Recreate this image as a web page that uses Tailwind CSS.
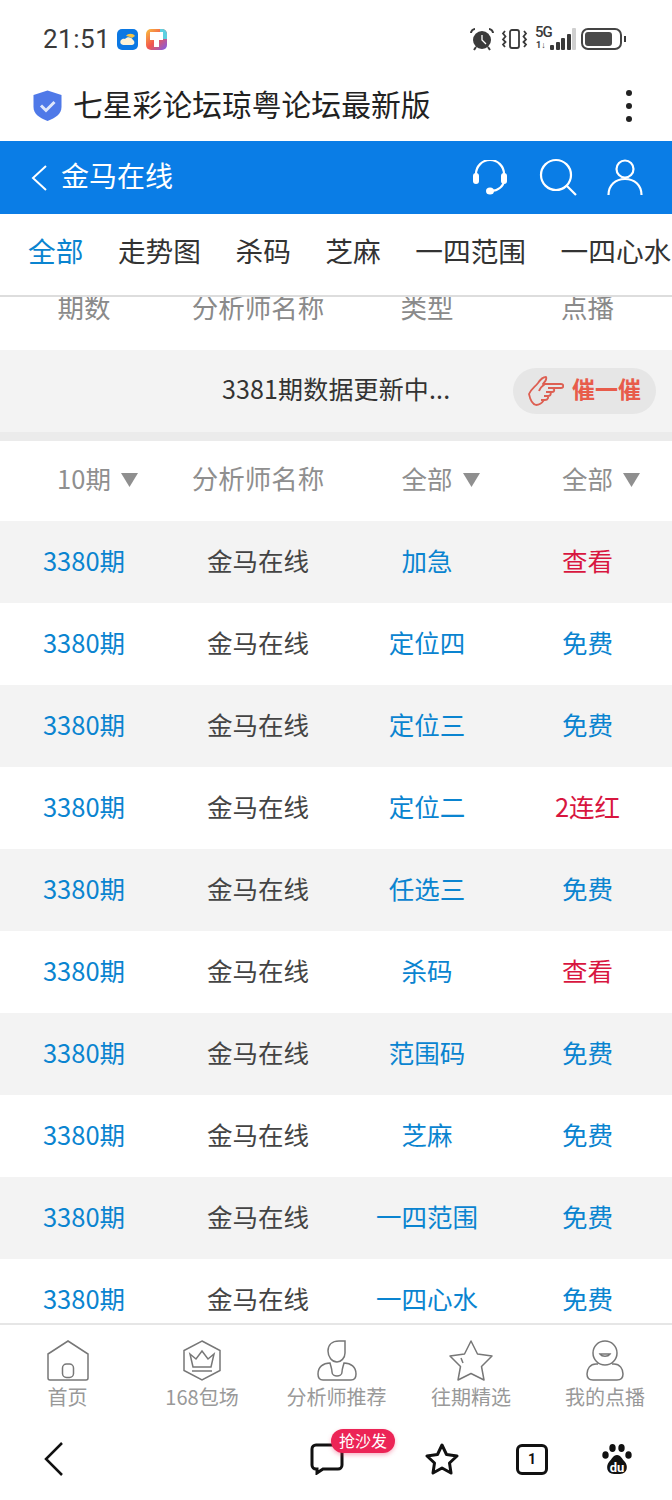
<!doctype html>
<html>
<head>
<meta charset="UTF-8">
<meta name="viewport" content="width=device-width, initial-scale=1.0">
<script src="https://cdn.jsdelivr.net/npm/@tailwindcss/browser@4"></script>
<title>金马在线</title>
</head>
<body class="bg-white font-['Noto_Sans_CJK_SC','Noto_Sans',sans-serif]">
<div class="w-[672px] h-[1500px] flex flex-col overflow-hidden">

  <!-- status bar -->
  <div class="h-[70px] flex items-center justify-between pl-[43px] pr-[46px] pt-[8px] text-[#3a3a3a]">
    <div class="flex items-center">
      <span class="text-[26px] font-['Roboto'] tracking-[0.5px] mr-[7px]">21:51</span>
      <svg class="mr-[8px]" width="21" height="21" viewBox="0 0 21 21"><rect width="21" height="21" rx="5" fill="#0b78e3"/><path d="M4 15c-2-3 1-6 4-5 2-3 7-2 8 1 2 1 2 5-1 5H6z" fill="#fdf3d8"/><path d="M9 7c2-3 7-3 9 0l-3 2c-2-1-4-2-6-2z" fill="#f6c445"/></svg>
      <svg width="21" height="21" viewBox="0 0 21 21"><defs><linearGradient id="g" x1="0" y1="0" x2="1" y2="1"><stop offset="0" stop-color="#f9c23c"/><stop offset=".5" stop-color="#f2564e"/><stop offset="1" stop-color="#7b5cf0"/></linearGradient></defs><rect width="21" height="21" rx="5" fill="url(#g)"/><path d="M14 0h2a5 5 0 0 1 5 5v5h-7z" fill="#5ccfe0"/><path d="M4 3h13v8h-4v7H8v-7H4z" fill="#fff"/></svg>
    </div>
    <div class="flex items-center">
      <svg class="mr-[7px]" width="24" height="24" viewBox="0 0 24 24" fill="#3a3a3a"><circle cx="12" cy="13" r="9"/><path d="M12 8v5l4 4" stroke="#fff" stroke-width="1.300" fill="none"/><path d="M1 6c0-2 2-4 4-4M23 6c0-2-2-4-4-4M6 20l-2 3M18 20l2 3" stroke="#3a3a3a" stroke-width="2" fill="none"/></svg>
      <svg class="mr-[7px]" width="27" height="20" viewBox="0 0 27 20" fill="none" stroke="#3a3a3a" stroke-width="1.800"><rect x="9" y="1" width="9" height="18" rx="2"/><path d="M4 2 2 4.500 4.500 7.500 2 10.500 4.500 13 2 15.500 4 18M23 2l2 2.500-2.500 3 2.500 3-2.500 2.500 2.500 2.500-2 2.500"/></svg>
      <div class="relative w-[39px] h-[22px] mr-[7px]">
        <span class="absolute left-0 top-[-3px] text-[15px] leading-[15px] font-medium tracking-[-1px] font-['Roboto'] text-[#3a3a3a]">5G</span>
        <span class="absolute left-[1px] top-[13px] text-[9px] leading-[9px] font-bold font-['Roboto'] text-[#3a3a3a]">1↓</span>
        <div class="absolute left-[15px] bottom-0 flex items-end gap-[1.500px]">
          <i class="block w-[4px] h-[5px] bg-[#3a3a3a] rounded-[1px]"></i><i class="block w-[4px] h-[8px] bg-[#3a3a3a] rounded-[1px]"></i><i class="block w-[4px] h-[12px] bg-[#3a3a3a] rounded-[1px]"></i><i class="block w-[4px] h-[16px] bg-[#3a3a3a] rounded-[1px]"></i><i class="block w-[4px] h-[22px] bg-[#cfcfcf] rounded-[1px]"></i>
        </div>
      </div>
      <div class="w-[41px] h-[22px] border-2 border-[#444] rounded-[7px] p-[2px]"><div class="w-[27px] h-full bg-[#4a4a4a] rounded-[3px]"></div></div>
      <div class="w-[2px] h-[6px] bg-[#3a3a3a] ml-[2px]"></div>
    </div>
  </div>

  <!-- browser address bar -->
  <div class="h-[71px] flex items-center justify-between pl-[33px] pr-[40px]">
    <div class="flex items-center">
      <svg class="mr-[11px]" width="29" height="31" viewBox="0 0 29 31"><path d="M14.500 0.500 28.500 5v12c0 7-6 11-14 14C6.500 28 0.500 24 0.500 17V5z" fill="#4f79e8"/><path d="M8 15.500l5 5 8.500-8.500" fill="none" stroke="#dfe7fb" stroke-width="3"/></svg>
      <span class="text-[29.800px] leading-none text-[#222] pb-[4px]">七星彩论坛琼粤论坛最新版</span>
    </div>
    <div class="flex flex-col gap-[7px]">
      <i class="block w-[6px] h-[6px] rounded-full bg-[#222]"></i><i class="block w-[6px] h-[6px] rounded-full bg-[#222]"></i><i class="block w-[6px] h-[6px] rounded-full bg-[#222]"></i>
    </div>
  </div>

  <!-- blue header -->
  <div class="h-[73px] bg-[#0a7de6] flex items-center justify-between pl-[31px] pr-[29px] text-white">
    <div class="flex items-center">
      <svg class="mr-[14px]" width="16" height="26" viewBox="0 0 16 26" fill="none" stroke="#fff" stroke-width="2"><path d="M15 1 2 13l13 12"/></svg>
      <span class="text-[28px] leading-none pb-[6px]">金马在线</span>
    </div>
    <div class="flex items-center">
      <svg class="mr-[31px]" width="36" height="36" viewBox="0 0 36 36" fill="none" stroke="#fff" stroke-width="2.200"><path d="M4 18V14a14 14 0 0 1 28 0v4"/><path d="M32 20c0 6-6 11-13 11"/><rect x="1" y="13" width="6" height="11" rx="3" fill="#fff" stroke="none"/><rect x="29" y="13" width="6" height="11" rx="3" fill="#fff" stroke="none"/><ellipse cx="18" cy="31" rx="4" ry="3.500" fill="#fff" stroke="none"/></svg>
      <svg class="mr-[29px]" width="39" height="39" viewBox="0 0 39 39" fill="none" stroke="#fff" stroke-width="2.200"><circle cx="17" cy="17" r="15"/><path d="M28 28l9 9"/></svg>
      <svg width="36" height="37" viewBox="0 0 36 37" fill="none" stroke="#fff" stroke-width="2.200"><circle cx="18" cy="10" r="8.500"/><path d="M1.500 36c0-10 7-16 16.500-16s16.500 6 16.500 16"/></svg>
    </div>
  </div>

  <!-- tabs -->
  <div class="h-[81px] flex items-center whitespace-nowrap pl-[28px] gap-[34.500px] text-[27.700px] leading-none text-[#333] overflow-hidden shrink-0 pb-[8px]">
    <span class="text-[#0a84d0]">全部</span><span>走势图</span><span>杀码</span><span>芝麻</span><span>一四范围</span><span>一四心水</span>
  </div>
  <div class="h-[2px] bg-[#dddddd] shrink-0"></div>

  <!-- column titles, scrolled under the tabs -->
  <div class="h-[53px] grid grid-cols-[168px_180px_158px_163px] text-center text-[26.500px] leading-[20px] text-[#8a8a8a] overflow-hidden shrink-0">
    <span>期数</span><span>分析师名称</span><span>类型</span><span>点播</span>
  </div>

  <!-- update notice -->
  <div class="h-[82px] bg-[#f3f3f3] flex items-center shrink-0 pl-[222px] pr-[16px] justify-between">
    <span class="text-[25px] leading-none text-[#333] tracking-[0.15px] pb-[6px]">3381期数据更新中...</span>
    <div class="w-[143px] h-[46px] rounded-full bg-[#e6e6e6] flex items-center pl-[15px]">
      <svg class="mr-[8px]" width="36" height="30" viewBox="0 0 36 30" fill="none" stroke="#dd5f52" stroke-width="1.800" stroke-linejoin="round"><path d="M1 18C3 13 7 11 10 7 12 4 15 1 18 1c1 2-1 5-3 7h18c3 0 3 4 0 4H24c3 0 3 4 0 4h-3c3 0 2 4-1 4h-1c2 1 1 4-2 4h-1c-2 3-5 5-8 5-4-1-6-6-7-11z"/><path d="M11 15c1-3 3-5 6-7M16 24h-3M19 20h-3M21 16h-3M24 12h-4"/></svg>
      <span class="text-[23px] leading-none font-bold text-[#e85c4b] pb-[6px]">催一催</span>
    </div>
  </div>
  <div class="h-[9px] bg-[#ebebeb] shrink-0"></div>

  <!-- filters -->
  <div class="h-[80px] grid grid-cols-[168px_180px_158px_163px] items-center text-center text-[25.500px] leading-none text-[#8f8f8f] shrink-0 pb-[6px]">
    <div class="flex items-center justify-center gap-[10px] pl-[27px]"><span>10期</span><svg class="mt-[4px]" width="17" height="14" viewBox="0 0 17 14" fill="#8f8f8f"><path d="M0 0h17L8.500 14z"/></svg></div>
    <span class="text-[26.500px]">分析师名称</span>
    <div class="flex items-center justify-center gap-[10px] pl-[27px]"><span>全部</span><svg class="mt-[4px]" width="17" height="14" viewBox="0 0 17 14" fill="#8f8f8f"><path d="M0 0h17L8.500 14z"/></svg></div>
    <div class="flex items-center justify-center gap-[10px] pl-[27px]"><span>全部</span><svg class="mt-[4px]" width="17" height="14" viewBox="0 0 17 14" fill="#8f8f8f"><path d="M0 0h17L8.500 14z"/></svg></div>
  </div>

  <!-- rows -->
  <div class="flex-1 min-h-0 overflow-hidden text-[25.500px] leading-none text-center text-[#0a84d0]">
    <div class="h-[82px] grid grid-cols-[168px_180px_158px_163px] items-center bg-[#f3f3f3] pb-[5px]"><span>3380期</span><span class="text-[#444]">金马在线</span><span>加急</span><span class="text-[#d8163f]">查看</span></div>
    <div class="h-[82px] grid grid-cols-[168px_180px_158px_163px] items-center pb-[5px]"><span>3380期</span><span class="text-[#444]">金马在线</span><span>定位四</span><span>免费</span></div>
    <div class="h-[82px] grid grid-cols-[168px_180px_158px_163px] items-center bg-[#f3f3f3] pb-[5px]"><span>3380期</span><span class="text-[#444]">金马在线</span><span>定位三</span><span>免费</span></div>
    <div class="h-[82px] grid grid-cols-[168px_180px_158px_163px] items-center pb-[5px]"><span>3380期</span><span class="text-[#444]">金马在线</span><span>定位二</span><span class="text-[#d8163f]">2连红</span></div>
    <div class="h-[82px] grid grid-cols-[168px_180px_158px_163px] items-center bg-[#f3f3f3] pb-[5px]"><span>3380期</span><span class="text-[#444]">金马在线</span><span>任选三</span><span>免费</span></div>
    <div class="h-[82px] grid grid-cols-[168px_180px_158px_163px] items-center pb-[5px]"><span>3380期</span><span class="text-[#444]">金马在线</span><span>杀码</span><span class="text-[#d8163f]">查看</span></div>
    <div class="h-[82px] grid grid-cols-[168px_180px_158px_163px] items-center bg-[#f3f3f3] pb-[5px]"><span>3380期</span><span class="text-[#444]">金马在线</span><span>范围码</span><span>免费</span></div>
    <div class="h-[82px] grid grid-cols-[168px_180px_158px_163px] items-center pb-[5px]"><span>3380期</span><span class="text-[#444]">金马在线</span><span>芝麻</span><span>免费</span></div>
    <div class="h-[82px] grid grid-cols-[168px_180px_158px_163px] items-center bg-[#f3f3f3] pb-[5px]"><span>3380期</span><span class="text-[#444]">金马在线</span><span>一四范围</span><span>免费</span></div>
    <div class="h-[82px] grid grid-cols-[168px_180px_158px_163px] items-center pb-[5px]"><span>3380期</span><span class="text-[#444]">金马在线</span><span>一四心水</span><span>免费</span></div>
  </div>

  <!-- bottom nav -->
  <div class="h-[97px] shrink-0 border-t-2 border-[#e6e6e6] grid grid-cols-[135px_134px_135px_134px_134px] text-center text-[20px] leading-none text-[#999] pt-[15px]">
    <div class="flex flex-col items-center">
      <svg width="42" height="41" viewBox="0 0 42 41" fill="none" stroke="#777" stroke-width="1.500"><path d="M1 14 21 1l20 13v24a2 2 0 0 1-2 2H3a2 2 0 0 1-2-2z"/><rect x="15.500" y="24" width="11" height="13.500" rx="4"/></svg>
      <span class="mt-[6px]">首页</span>
    </div>
    <div class="flex flex-col items-center">
      <svg width="40" height="41" viewBox="0 0 40 41" fill="none" stroke="#777" stroke-width="1.500"><path d="M20 1 38 10.500v20L20 40 2 30.500v-20z"/><path d="M8 14l6 5 6-8 6 8 6-5-3 13H11z"/><path d="M10 31h20"/></svg>
      <span class="mt-[6px]">168包场</span>
    </div>
    <div class="flex flex-col items-center">
      <svg width="40" height="41" viewBox="0 0 40 41" fill="none" stroke="#777" stroke-width="1.500"><path d="M11 11c0-6 4-10 11-10h6v12c0 5-4 9-8 9-5 0-9-5-9-11z"/><path d="M13 23C6 23 1 27 1 34c0 4 2 6 5 6h28c3 0 5-2 5-6 0-7-5-11-12-11-1 4-2 6-2 9 0 3-3 4-5 4s-5-1-5-4c0-3-1-5-2-9z"/></svg>
      <span class="mt-[6px]">分析师推荐</span>
    </div>
    <div class="flex flex-col items-center">
      <svg width="44" height="41" viewBox="0 0 44 41" fill="none" stroke="#777" stroke-width="1.500"><path d="M22 1l6.500 13 14.500 2-10.500 10.500L35 40 22 33.500 9 40l2.500-13.500L1 16l14.500-2z" stroke-linejoin="round"/><path d="M12 18l2 5"/></svg>
      <span class="mt-[6px]">往期精选</span>
    </div>
    <div class="flex flex-col items-center">
      <svg width="38" height="41" viewBox="0 0 38 41" fill="none" stroke="#777" stroke-width="1.500"><circle cx="19" cy="13" r="12"/><path d="M14 14c2 3 8 3 10 0z"/><path d="M12 24H10C4 24 1 29 1 34c0 4 2 6 6 6h24c4 0 6-2 6-6 0-5-3-10-9-10h-2"/></svg>
      <span class="mt-[6px]">我的点播</span>
    </div>
  </div>

  <!-- browser toolbar -->
  <div class="h-[80px] shrink-0 flex items-center pl-[44px] pb-[2px]">
    <svg class="mr-[246px]" width="20" height="34" viewBox="0 0 20 34" fill="none" stroke="#111" stroke-width="2.500"><path d="M18 1 2 17l16 16"/></svg>
    <div class="relative mr-[81px]">
      <svg class="block" width="34" height="32" viewBox="0 0 34 32" fill="none" stroke="#111" stroke-width="3"><path d="M6 2h22a4 4 0 0 1 4 4v16a4 4 0 0 1-4 4H13l-6 4v-4H6a4 4 0 0 1-4-4V6a4 4 0 0 1 4-4z"/></svg>
      <span class="absolute left-[21px] top-[-14px] h-[24px] w-[64px] rounded-full bg-[#ec2456] text-white text-[16px] leading-[22px] text-center whitespace-nowrap shadow-[0_2px_4px_rgba(236,36,86,0.35)]">抢沙发</span>
    </div>
    <svg class="mr-[57px]" width="34" height="32" viewBox="0 0 34 32" fill="none" stroke="#111" stroke-width="3"><path d="M17 2l4.500 9.500 10.500 1.500-7.500 7L26 30l-9-5-9 5 1.500-10L2 13l10.500-1.500z" stroke-linejoin="round"/></svg>
    <div class="w-[32px] h-[31px] mr-[54px] border-[3px] border-[#111] rounded-[6px] flex items-center justify-center text-[14px] leading-none font-bold text-[#111] font-['Roboto']">1</div>
    <svg width="30" height="32" viewBox="0 0 30 32" fill="#111"><ellipse cx="10.500" cy="5" rx="3.200" ry="4"/><ellipse cx="19.500" cy="5" rx="3.200" ry="4"/><ellipse cx="3.500" cy="12" rx="3.200" ry="3.800"/><ellipse cx="26.500" cy="12" rx="3.200" ry="3.800"/><path d="M15 12c4 0 5 4 8 7s3 12-5 12h-6c-8 0-8-9-5-12s4-7 8-7z"/><text x="15" y="29" text-anchor="middle" font-size="13" font-weight="700" fill="#fff" font-family="Roboto">du</text></svg>
  </div>
</div>
</body>
</html>
